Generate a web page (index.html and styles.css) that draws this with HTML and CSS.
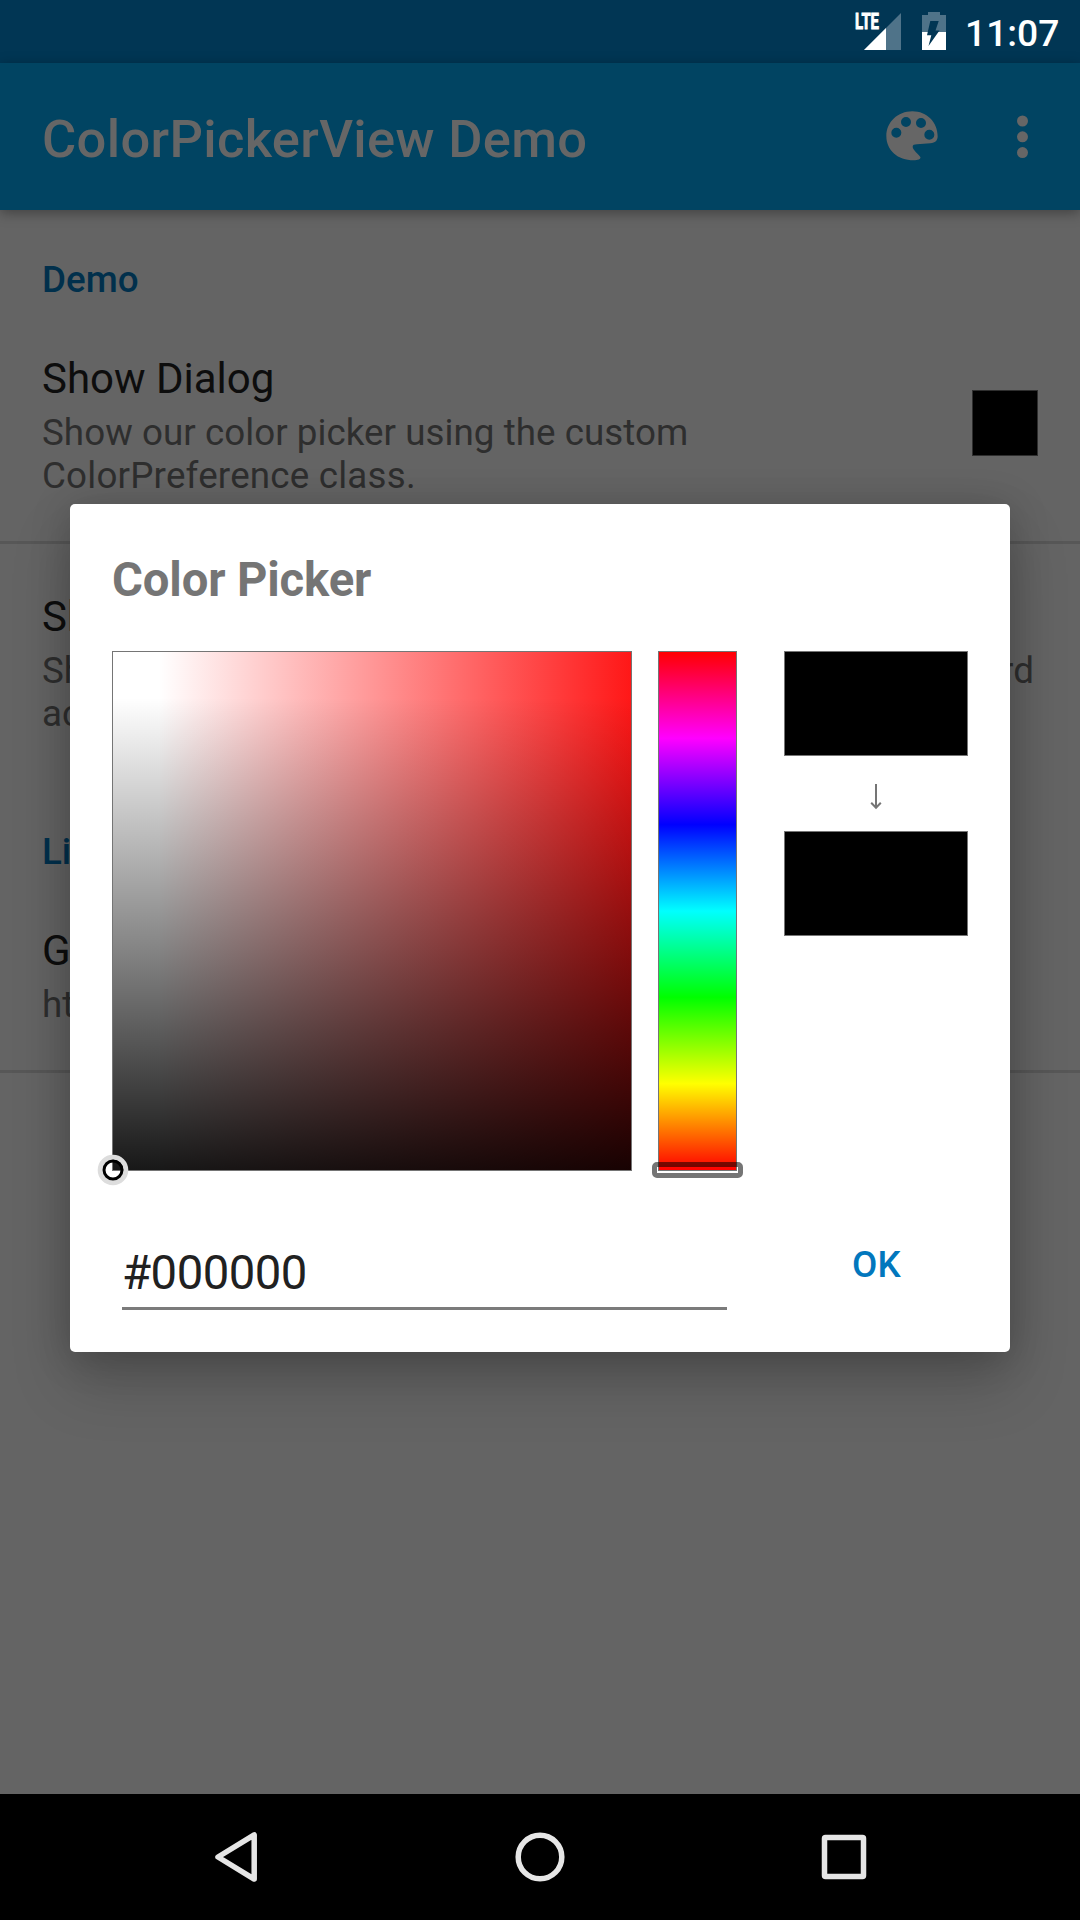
FILE: index.html
```html
<!DOCTYPE html>
<html lang="en">
<head>
<meta charset="utf-8">
<title>ColorPickerView Demo</title>
<link rel="stylesheet" href="styles.css">
</head>
<body>
<div class="screen">
  <header class="status-bar">
    <svg class="signal" width="48" height="40" viewBox="0 0 48 40">
      <path d="M10 39 47 2V39Z" fill="#4f7389"/>
      <path d="M10 39 32 17V39Z" fill="#fff"/>
      <text class="lte" x="1" y="18" textLength="24" lengthAdjust="spacingAndGlyphs">LTE</text>
    </svg>
    <svg class="battery" width="24" height="38" viewBox="0 0 24 38">
      <path d="M6 0H18V3H24V20H0V3H6Z" fill="#4f7389"/>
      <path d="M0 20H24V38H0Z" fill="#fff"/>
      <path d="M8.3 9H16.7L13.5 18.5H17.5L6.5 34 9.3 23.3H5Z" fill="#013654"/>
    </svg>
    <span class="clock">11:07</span>
  </header>

  <div class="app-bar">
    <h1 class="app-title">ColorPickerView Demo</h1>
    <svg class="palette" width="52" height="50" viewBox="197 332 156 150">
      <path fill="#666" fill-rule="evenodd" d="M352 408C352 366 320 333 276 333C232 333 198 366 198 407C198 450 232 480 280 480C292 480 303 476 300 470C294 460 277 449 277 439C277 434 282 432 290 432L330 429C345 428 352 420 352 408ZM213 397a15 15 0 1 0 30 0a15 15 0 1 0-30 0ZM242 365a15 15 0 1 0 30 0a15 15 0 1 0-30 0ZM287 368a15 15 0 1 0 30 0a15 15 0 1 0-30 0ZM312 403a15 15 0 1 0 30 0a15 15 0 1 0-30 0Z"/>
    </svg>
    <svg class="overflow" width="12" height="44" viewBox="0 0 12 44" fill="#666">
      <circle cx="5.5" cy="6" r="5.5"/><circle cx="5.5" cy="21.8" r="5.5"/><circle cx="5.5" cy="37.6" r="5.5"/>
    </svg>
  </div>

  <main class="list">
    <h2 class="section">Demo</h2>
    <div class="row">
      <div class="row-text">
        <div class="row-title">Show Dialog</div>
        <div class="summary">Show our color picker using the custom<br><span class="loose">ColorPreference class.</span></div>
      </div>
      <div class="row-swatch"></div>
    </div>
    <div class="row row-last">
      <div class="row-text">
        <div class="row-title">Show Activity</div>
        <div class="summary"><div class="full-line">Show our color picker being used from a standard</div>activity.</div>
      </div>
    </div>
    <h2 class="section">Library</h2>
    <div class="row">
      <div class="row-text">
        <div class="row-title">GitHub</div>
        <div class="summary">https://github.com/</div>
      </div>
    </div>
  </main>

  <nav class="nav-bar">
    <svg width="50" height="54" viewBox="0 0 50 54"><path d="M7 27 43.2 4.9V49.1Z" /></svg>
    <svg width="50" height="54" viewBox="0 0 50 54"><circle cx="25" cy="27" r="21.8"/></svg>
    <svg width="50" height="54" viewBox="0 0 50 54"><rect x="5.5" y="7.5" width="39" height="39" rx="1"/></svg>
  </nav>

  <section class="dialog">
    <h2 class="dialog-title">Color Picker</h2>
    <div class="pickers">
      <div class="sat-panel">
        <svg class="sat-marker" width="32" height="32" viewBox="0 0 32 32" fill="none">
          <circle cx="16" cy="16" r="12.8" stroke="#ddd" stroke-width="5"/>
          <circle cx="16" cy="16" r="9" stroke="#000" stroke-width="3"/>
        </svg>
      </div>
      <div class="hue-panel"><div class="hue-marker"></div></div>
      <div class="compare">
        <div class="color-box"></div>
        <svg class="arrow" width="12" height="27" viewBox="0 0 12 27" fill="none" stroke="#757575" stroke-width="2"><path d="M6 1V25M1.2 19.8 6 24.7 10.8 19.8"/></svg>
        <div class="color-box"></div>
      </div>
    </div>
    <div class="actions">
      <div class="hex">#000000</div>
      <div class="ok">OK</div>
    </div>
  </section>
</div>
</body>
</html>
```
FILE: styles.css
```css
* { box-sizing: border-box; }
body { margin: 0; font-family: Roboto, "Noto Sans", sans-serif; }
h1, h2 { margin: 0; }
svg { display: block; flex: none; }

.screen {
  position: relative;
  display: flex;
  flex-direction: column;
  width: 1080px;
  height: 1920px;
  overflow: hidden;
  background: #646464;
}

.status-bar {
  display: flex;
  justify-content: flex-end;
  height: 63px;
  padding: 0 21px 0 0;
  background: #013654;
}
.signal { margin: 11px 20px 0 0; }
.lte { font: 700 22px Roboto, sans-serif; fill: #fff; stroke: #fff; stroke-width: .9px; }
.battery { margin: 12px 19px 0 0; }
.clock { width: 94px; color: #fff; font-size: 37.2px; font-weight: 500; line-height: 67px; }

.app-bar {
  display: flex;
  align-items: flex-start;
  height: 147px;
  padding: 0 51px 0 42px;
  background: #014462;
  box-shadow: 0 3px 12px rgba(0, 0, 0, .35);
}
.app-title { flex: 1; color: #666; font-size: 52.5px; font-weight: 500; line-height: 62px; letter-spacing: .32px; margin-top: 45px; white-space: nowrap; }
.palette { margin: 48px 79px 0 0; }
.overflow { margin-top: 52px; }

.list { flex: 1; padding-top: 48px; }
.section { padding: 0 42px; margin-bottom: 53px; font-size: 36.75px; line-height: 43px; font-weight: 500; color: #01304c; }
.row {
  display: flex;
  justify-content: space-between;
  padding: 0 42px 44px;
  border-bottom: 3px solid #575757;
  margin-bottom: 48px;
}
.row-last { border-bottom: 0; padding-bottom: 0; margin-bottom: 95px; }
.row-text { flex: 1; }
.row-title { font-size: 42px; line-height: 49px; color: #0d0d0d; }
.summary { margin-top: 8px; font-size: 36.75px; line-height: 43px; letter-spacing: .04px; color: #2e2e2e; white-space: nowrap; }
.loose { letter-spacing: .2px; }
.full-line { width: 992px; text-align-last: justify; white-space: normal; }
.row-swatch { width: 66px; height: 66px; margin-top: 36px; background: #000; border: 1px solid #2e2e2e; }

.nav-bar {
  display: flex;
  justify-content: space-between;
  height: 126px;
  padding: 36px 211px 0;
  background: #000;
}
.nav-bar svg { fill: none; stroke: #e6e6e6; stroke-width: 5.5; stroke-linejoin: round; }

.dialog {
  position: absolute;
  left: 70px;
  top: 504px;
  width: 940px;
  height: 848px;
  padding: 48px 42px 0;
  border-radius: 5px;
  background: #fff;
  box-shadow: 0 32px 60px rgba(0, 0, 0, .18), 0 4px 40px rgba(0, 0, 0, .2);
}
.dialog-title { height: 99px; font-size: 47.25px; line-height: 56px; font-weight: 700; letter-spacing: -.15px; color: #757575; }
.pickers { display: flex; height: 520px; }
.sat-panel {
  position: relative;
  width: 520px;
  height: 520px;
  border: 1px solid #757575;
  background:
    linear-gradient(to bottom, rgba(0, 0, 0, 0) 46px, #000 566px),
    linear-gradient(to right, #fff 46px, #f00 566px);
}
.sat-marker { position: absolute; left: -16px; bottom: -16px; }
.hue-panel {
  position: relative;
  width: 79px;
  height: 520px;
  margin-left: 26px;
  border: 1px solid #757575;
  background: linear-gradient(#f00, #f0f, #00f, #0ff, #0f0, #ff0, #f00);
}
.hue-marker {
  position: absolute;
  left: -7px;
  right: -7px;
  bottom: -8px;
  height: 16px;
  border: 5px solid rgba(0, 0, 0, .54);
  border-radius: 5px;
}
.compare { display: flex; flex-direction: column; align-items: center; gap: 24px; width: 184px; margin-left: 47px; }
.arrow { margin: 3px 0 -3px; }
.color-box { width: 184px; height: 105px; background: #000; border: 1px solid #757575; }

.actions { display: flex; justify-content: space-between; padding: 66px 52px 0 10px; }
.hex { width: 605px; height: 73px; padding: 8px 0 0; border-bottom: 3px solid #7b7b7b; color: #212121; font-size: 47.25px; line-height: 56px; letter-spacing: -.5px; }
.ok { width: 64px; padding-top: 6px; color: #0277bd; font-size: 36.75px; font-weight: 500; line-height: 43px; letter-spacing: .3px; }
```
